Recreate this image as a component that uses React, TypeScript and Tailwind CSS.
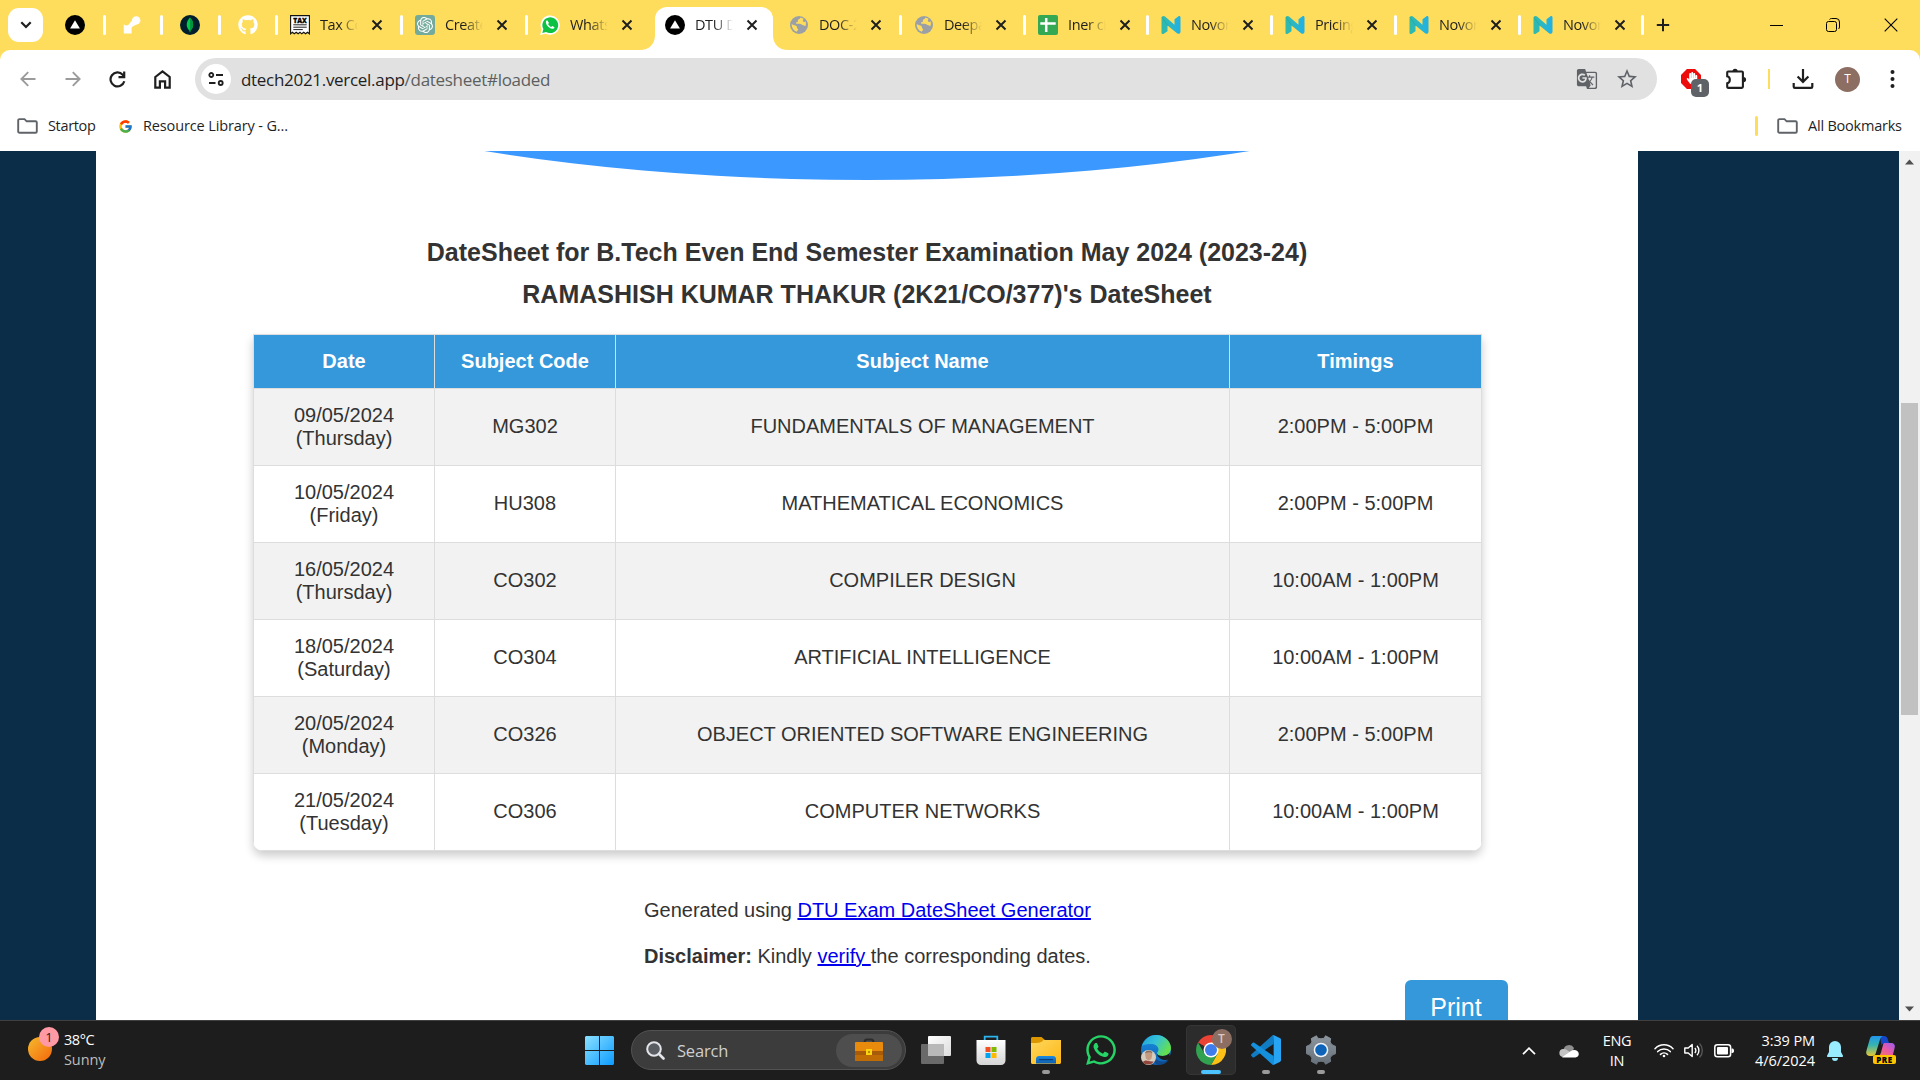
import React from "react";
import { FaGithub, FaWhatsapp, FaHandPaper } from "react-icons/fa";
import { SiOpenai } from "react-icons/si";
import { FcGoogle } from "react-icons/fc";
import { MdGTranslate, MdStarBorder } from "react-icons/md";

const UI = "font-['Open_Sans','Noto_Sans',sans-serif]";

/* ---------- favicons ---------- */

const Vercel = () => (
  <svg width="20" height="20" viewBox="0 0 20 20">
    <circle cx="10" cy="10" r="10" fill="#000" />
    <path d="M10 5.2 14.9 13.6H5.1z" fill="#fff" />
  </svg>
);

const Segment = () => (
  <svg width="20" height="20" viewBox="0 0 20 20" fill="#fff">
    <circle cx="14.2" cy="5.4" r="4.2" />
    <path d="M1.8 8.6c0 2.2 3.4 2.6 5 .9L11 4l5 4.5-5.6 3.3c-.6.5-.8 1-.8 1.700V18.500H1.800z" />
  </svg>
);

const Mongo = () => (
  <svg width="20" height="20" viewBox="0 0 20 20">
    <circle cx="10" cy="10" r="10" fill="#001e2b" />
    <path d="M10 2.6c2 2.200 3.200 4.400 3.200 7.100 0 2.600-1.200 4.500-2.800 5.700l-.2 1.900h-.5l-.2-1.900C7.900 14.200 6.700 12.300 6.700 9.700c0-2.700 1.300-4.900 3.300-7.100z" fill="#00ca48" />
    <path d="M10 2.600c2 2.200 3.200 4.400 3.200 7.100 0 2.600-1.200 4.500-2.800 5.700l-.2 1.900H10z" fill="#00963e" />
  </svg>
);

const Tax = () => (
  <svg width="20" height="20" viewBox="0 0 20 20">
    <path d="M.6.6h18.800v18.200l-1.900-1.500-1.900 1.500-1.900-1.500-1.900 1.500L10 17.300l-1.900 1.500-1.900-1.500-1.900 1.500-1.900-1.500-1.800 1.500z" fill="#fff" stroke="#111" strokeWidth="1.1" />
    <text x="10" y="7.700" textAnchor="middle" fontSize="6.600" fontWeight="800" fontFamily="Open Sans" textLength="13.500" stroke="#111" strokeWidth=".3">TAX</text>
    <path d="M3.300 9.800h13.400M3.300 12.200h13.400M3.300 14.600h9.500" stroke="#222" strokeWidth="1" />
  </svg>
);

const OpenAI = () => (
  <span className="flex h-5 w-5 items-center justify-center rounded-[3px] bg-[#74aa9c] text-white">
    <SiOpenai size={16} />
  </span>
);

const WhatsAppSmall = () => (
  <svg width="20" height="20" viewBox="0 0 20 20">
    <path d="M1 19.200 2.300 14.400A9 9 0 1 1 5.800 17.900z" fill="#fff" stroke="#fff" strokeWidth="1.200" />
    <path d="M2.300 17.900 3.400 14.100A7.900 7.900 0 1 1 6.100 16.900z" fill="#0dc143" />
    <path d="M7.200 5.200c-.9.300-1.500 1.200-1.300 2.300.5 3.100 3.200 5.700 6.200 6.300 1.200.2 2.200-.5 2.400-1.600l-2.200-1.300-1.200 1.100c-1.300-.5-2.400-1.600-3-2.900l.9-1.200z" fill="#fff" />
  </svg>
);

const Globe = () => (
  <svg width="20" height="20" viewBox="0 0 20 20">
    <circle cx="10" cy="10" r="9" fill="#9aa0a6" />
    <path d="M10.600 2.600c.8.400.6 1.200-.2 1.500-1.200.3-1.700.9-1.500 1.800.2.700-.6 1.300-1.400 1.400-.9.200-.6 1.400.2 1.500h2.900c1.600.1 2 1.100 3.200 1.200 1.100.1 1 .9 2.600 1 .5-1 .8-2.800.2-4.400-1.100.6-2.400.5-2.700-.4-.3-1 .6-1.500.5-2.700z" fill="#ffdd5c" />
    <path d="M2.700 9c1.600 1.700 3.500.8 4.700 2 1 1 .2 2.100 1.200 2.700 1 .5.600 1.600-.2 1.900l-.6 1.200C4.700 15.700 2.500 12.700 2.700 9z" fill="#ffdd5c" />
  </svg>
);

const Sheet = () => (
  <svg width="20" height="20" viewBox="0 0 20 20">
    <rect width="20" height="20" rx="2" fill="#34a853" />
    <path d="M8.200 3v14M2.300 8.400h15.400" stroke="#fff" strokeWidth="2.500" />
  </svg>
);

const NLogo = () => (
  <svg width="20" height="20" viewBox="0 0 20 20">
    <defs>
      <linearGradient id="nl" x1="0" y1="0" x2="1" y2="0">
        <stop offset="0" stopColor="#31b9a6" />
        <stop offset=".5" stopColor="#2bb7c8" />
        <stop offset="1" stopColor="#1fb0e8" />
      </linearGradient>
    </defs>
    <path d="M.5 3.200C.5 1.200 2.700.4 4 1.600l9.500 8.200V4.200L17.500 1.300c1-.6 2 0 2 1.200v14.300c0 1.900-2 2.700-3.500 1.500L6.500 10.500v5.800l-3.700 2.400c-1.200.7-2.300 0-2.300-1.300z" fill="url(#nl)" />
    <path d="M.8 2.200 7 10.800" stroke="#1a9aa5" strokeWidth=".7" opacity=".6" />
  </svg>
);

const X = () => (
  <svg width="12" height="12" viewBox="0 0 12 12" className="shrink-0">
    <path d="M1.500 1.500l9 9M10.500 1.500l-9 9" stroke="#1f1f1f" strokeWidth="2" />
  </svg>
);

/* ---------- tab strip ---------- */

const Sep = () => <span className="h-5 w-[3px] shrink-0 rounded-sm bg-white" />;

function Pinned({ w, pad, children }: { w: string; pad: string; children: React.ReactNode }) {
  return (
    <div className={`flex h-full shrink-0 items-center justify-between ${w} ${pad}`}>
      {children}
      <Sep />
    </div>
  );
}

function Tab({ icon, title, w, last = true }: { icon: React.ReactNode; title: string; w: string; last?: boolean }) {
  return (
    <div className={`flex h-full shrink-0 items-center pl-3 ${w}`}>
      <span className="w-5 shrink-0">{icon}</span>
      <span className="ml-[10px] w-[38px] shrink-0 overflow-hidden text-[14.500px] leading-5 tracking-[-0.4px] whitespace-nowrap text-[#1f1f1f] [mask-image:linear-gradient(to_right,#000_50%,transparent_100%)]">
        {title}
      </span>
      <span className="ml-[12.500px] flex">
        <X />
      </span>
      {last && (
        <span className="ml-auto flex">
          <Sep />
        </span>
      )}
    </div>
  );
}

function TabStrip() {
  return (
    <div className="flex h-[50px] items-center bg-[#ffdd5c]">
      <div className="ml-2 flex h-[34px] w-[35px] shrink-0 items-center justify-center rounded-[11px] bg-white">
        <svg width="12" height="8" viewBox="0 0 12 8">
          <path d="M1.300 1.300 6 6l4.700-4.700" fill="none" stroke="#1f1f1f" strokeWidth="2.200" />
        </svg>
      </div>
      <Pinned w="w-[63px]" pad="pl-[22px]"><Vercel /></Pinned>
      <Pinned w="w-[57px]" pad="pl-4"><Segment /></Pinned>
      <Pinned w="w-[58px]" pad="pl-[17px]"><Mongo /></Pinned>
      <Pinned w="w-[57px]" pad="pl-[17px]"><FaGithub size={20} color="#fff" /></Pinned>
      <Tab icon={<Tax />} title="Tax Co" w="w-[125px]" />
      <Tab icon={<OpenAI />} title="Create" w="w-[125px]" />
      <Tab icon={<WhatsAppSmall />} title="Whats" w="w-[112px]" last={false} />
      <div className="flex h-full w-[148px] shrink-0">
        <div className="flex w-[15px] items-end">
          <svg width="15" height="15" viewBox="0 0 15 15"><path d="M15 0v15H0C9 15 15 9 15 0z" fill="#fff" /></svg>
        </div>
        <div className="mt-[7px] h-[43px] w-[118px] rounded-t-xl bg-white">
          <div className="-mt-[7px] -ml-[2px] h-[50px]">
            <Tab icon={<Vercel />} title="DTU Da" w="w-[118px]" last={false} />
          </div>
        </div>
        <div className="flex w-[15px] items-end">
          <svg width="15" height="15" viewBox="0 0 15 15"><path d="M0 0v15h15C6 15 0 9 0 0z" fill="#fff" /></svg>
        </div>
      </div>
      <div className="-ml-[11px] flex h-full shrink-0">
        <Tab icon={<Globe />} title="DOC-2" w="w-[125px]" />
        <Tab icon={<Globe />} title="Deepa" w="w-[124px]" />
        <Tab icon={<Sheet />} title="Iner ci" w="w-[123px]" />
        <Tab icon={<NLogo />} title="Novor" w="w-[124px]" />
        <Tab icon={<NLogo />} title="Pricing" w="w-[124px]" />
        <Tab icon={<NLogo />} title="Novor" w="w-[124px]" />
        <Tab icon={<NLogo />} title="Novor" w="w-[123px]" />
      </div>
      <svg className="ml-3 shrink-0" width="14" height="14" viewBox="0 0 14 14">
        <path d="M7 .8v12.400M.8 7h12.400" stroke="#1f1f1f" strokeWidth="2" />
      </svg>
      <div className="mr-[22px] ml-auto flex items-center">
        <span className="mr-[43px] h-px w-[13px] bg-black" />
        <svg className="mr-[44px]" width="14" height="14" viewBox="0 0 14 14" fill="none" stroke="#000" strokeWidth="1">
          <rect x=".5" y="3.500" width="10" height="10" rx="2" />
          <path d="M3.500 1.500c.4-.6 1-1 2-1H10A3.500 3.500 0 0 1 13.500 4v5c0 .9-.4 1.500-1 2" />
        </svg>
        <svg width="14" height="14" viewBox="0 0 14 14">
          <path d="M.7.7l12.600 12.600M13.300.7.700 13.300" stroke="#000" strokeWidth="1.100" />
        </svg>
      </div>
    </div>
  );
}

/* ---------- toolbar ---------- */

const Folder = () => (
  <svg width="21" height="16" viewBox="0 0 21 16" className="shrink-0">
    <path d="M1.200 2.400c0-.8.500-1.300 1.300-1.300h5l2.200 2.200h8.800c.8 0 1.300.5 1.300 1.300v8.900c0 .8-.5 1.300-1.300 1.300h-16c-.8 0-1.300-.5-1.300-1.300z" fill="none" stroke="#5f6368" strokeWidth="1.900" />
  </svg>
);

function Toolbar() {
  return (
    <div className="bg-[#ffdd5c]">
      <div className="rounded-t-[10px] bg-white">
        <div className="flex h-[58px] items-center">
          <svg className="ml-5 shrink-0" width="16" height="16" viewBox="0 0 16 16" fill="none" stroke="#9b9b9b" strokeWidth="1.900">
            <path d="M15.500 8H1.800M8.200 1.200 1.400 8l6.800 6.800" />
          </svg>
          <svg className="ml-[29px] shrink-0" width="16" height="16" viewBox="0 0 16 16" fill="none" stroke="#9b9b9b" strokeWidth="1.900">
            <path d="M.5 8h13.700M7.800 1.200 14.600 8l-6.800 6.800" />
          </svg>
          <svg className="ml-[28px] shrink-0" width="17" height="17" viewBox="0 0 17 17" fill="none" stroke="#1f1f1f" strokeWidth="2.200">
            <path d="M15.300 10.300A7 7 0 1 1 13.700 3.700L15 5.300" />
            <path d="M15.200.500v5.700H9.500" />
          </svg>
          <svg className="ml-[28px] shrink-0" width="17" height="19" viewBox="0 0 17 19" fill="none" stroke="#1f1f1f" strokeWidth="2.200">
            <path d="M1.300 7 8.500 1.500 15.700 7v10.700h-4.600v-6.300H5.900v6.300H1.300z" />
          </svg>
          <div className="ml-6 flex h-[42px] w-[1462px] shrink-0 items-center rounded-full bg-[#e1e1e1]">
            <div className="ml-[6px] flex h-[30px] w-[30px] items-center justify-center rounded-full bg-white">
              <svg width="16" height="14" viewBox="0 0 16 14" fill="none" stroke="#1f1f1f" strokeWidth="1.800">
                <circle cx="3.300" cy="3" r="2" />
                <path d="M8 3h7M1 11h6.500" />
                <circle cx="12.700" cy="11" r="2" />
              </svg>
            </div>
            <span className="mt-[1px] ml-[10px] text-[17px] leading-6 tracking-[-0.3px] text-[#1f1f1f]">
              dtech2021.vercel.app<span className="text-[#5c5f5e]">/datesheet#loaded</span>
            </span>
            <MdGTranslate className="ml-auto text-[#5f6368]" size={22} />
            <MdStarBorder className="mr-[18px] ml-[17px] text-[#5f6368]" size={24} />
          </div>
          <div className="relative ml-6 h-5 w-[20px] shrink-0">
            <svg width="20" height="20" viewBox="0 0 20 20">
              <path d="M5.900 0h8.200L20 5.900v8.200L14.100 20H5.900L0 14.100V5.900z" fill="#ed0c0c" />
            </svg>
            <FaHandPaper className="absolute top-[3px] left-[5px] text-white" size={12} />
            <span className="absolute top-[10px] left-[10px] flex h-[18px] w-[18px] items-center justify-center rounded-[5px] bg-[#5f6368] text-[11px] font-bold text-white">1</span>
          </div>
          <svg className="ml-[24px] shrink-0" width="22" height="22" viewBox="0 0 22 22">
            <path d="M2.200 4.500c0-.7.400-1 1-1h13.600c.7 0 1.100.4 1.100 1.100v14.200c0 .7-.4 1.100-1.100 1.100H3.200c-.6 0-1-.4-1-1.100v-3.500c3.500-.8 3.500-6.300 0-7z" fill="none" stroke="#1f1f1f" strokeWidth="2.100" />
            <path d="M7.500 3.400a2.600 2.600 0 0 1 5.200 0zM18.400 8.900a2.700 2.700 0 0 1 0 5.400z" fill="#1f1f1f" />
          </svg>
          <span className="ml-[21px] h-5 w-[2px] shrink-0 bg-[#ffdd5c]" />
          <svg className="ml-[22px] shrink-0" width="22" height="20" viewBox="0 0 22 20" fill="none" stroke="#1f1f1f" strokeWidth="2.200">
            <path d="M11 0v12.500M5.600 7.500l5.400 5.400 5.400-5.400M1.700 14v3.700c0 .7.400 1.200 1.200 1.200h16.200c.8 0 1.200-.5 1.200-1.200V14" />
          </svg>
          <span className="ml-[21px] flex h-[25px] w-[25px] shrink-0 items-center justify-center rounded-full bg-[#8d6e63] text-[12px] text-white">T</span>
          <svg className="ml-[30px] shrink-0" width="5" height="18" viewBox="0 0 5 18" fill="#1f1f1f">
            <circle cx="2.500" cy="2" r="2" /><circle cx="2.500" cy="9" r="2" /><circle cx="2.500" cy="16" r="2" />
          </svg>
        </div>
        <div className="flex h-[43px] items-start pt-2 text-[14.500px] leading-[20px] text-[#1f1f1f]">
          <span className="mt-[2px] ml-[17px]"><Folder /></span>
          <span className="ml-[10px] w-[70px] tracking-[-0.35px]">Startop</span>
          <FcGoogle size={15} className="mt-[3px]" />
          <span className="ml-[10px] tracking-[-0.13px]">Resource Library - G...</span>
          <span className="ml-auto h-5 w-[3px] rounded bg-[#ffdd5c]" />
          <span className="mt-[2px] ml-[19px]"><Folder /></span>
          <span className="mr-[18px] ml-[10px] w-[94px] tracking-[-0.22px] whitespace-nowrap">All Bookmarks</span>
        </div>
      </div>
    </div>
  );
}

/* ---------- page ---------- */

const ROWS = [
  ["09/05/2024", "(Thursday)", "MG302", "FUNDAMENTALS OF MANAGEMENT", "2:00PM - 5:00PM"],
  ["10/05/2024", "(Friday)", "HU308", "MATHEMATICAL ECONOMICS", "2:00PM - 5:00PM"],
  ["16/05/2024", "(Thursday)", "CO302", "COMPILER DESIGN", "10:00AM - 1:00PM"],
  ["18/05/2024", "(Saturday)", "CO304", "ARTIFICIAL INTELLIGENCE", "10:00AM - 1:00PM"],
  ["20/05/2024", "(Monday)", "CO326", "OBJECT ORIENTED SOFTWARE ENGINEERING", "2:00PM - 5:00PM"],
  ["21/05/2024", "(Tuesday)", "CO306", "COMPUTER NETWORKS", "10:00AM - 1:00PM"],
];

function Page() {
  return (
    <div className="flex h-[869px] bg-[#0c2d48]">
      <div className="ml-24 flex w-[1542px] flex-col overflow-hidden bg-white font-['Liberation_Sans',Arial,sans-serif] text-[20px] leading-[23px] text-[#333]">
        <div className="flex h-[29px] shrink-0 items-end">
          <div className="h-[440px] w-full shrink-0 rounded-[50%] bg-[#3b98ff]" />
        </div>
        <div className="mt-[51px] text-center text-[25px] leading-[42px] font-bold">
          <h2>DateSheet for B.Tech Even End Semester Examination May 2024 (2023-24)</h2>
          <h2>RAMASHISH KUMAR THAKUR (2K21/CO/377)&apos;s DateSheet</h2>
        </div>
        <table className="mt-[19px] ml-[157px] w-[1229px] table-fixed border-collapse overflow-hidden rounded-b-[10px] text-center shadow-[0_5px_10px_rgba(0,0,0,0.2)]">
          <colgroup>
            <col className="w-[181px]" />
            <col className="w-[181px]" />
            <col className="w-[614px]" />
            <col className="w-[252px]" />
          </colgroup>
          <thead>
            <tr className="h-[54px] bg-[#3498db] text-white">
              {["Date", "Subject Code", "Subject Name", "Timings"].map((h) => (
                <th key={h} className="border border-[#ddd] font-bold">{h}</th>
              ))}
            </tr>
          </thead>
          <tbody>
            {ROWS.map(([date, day, code, name, time]) => (
              <tr key={date} className="h-[77px] odd:bg-[#f2f2f2]">
                <td className="border border-[#ddd]">{date}<br />{day}</td>
                <td className="border border-[#ddd] pb-[2px]">{code}</td>
                <td className="border border-[#ddd] pb-[2px]">{name}</td>
                <td className="border border-[#ddd] pb-[2px]">{time}</td>
              </tr>
            ))}
          </tbody>
        </table>
        <div className="mt-12 ml-[548px]">
          <p>Generated using <a className="text-[#0000ee] underline">DTU Exam DateSheet Generator</a></p>
          <p className="mt-[23px]"><b>Disclaimer:</b> Kindly <a className="text-[#0000ee] underline">verify </a>the corresponding dates.</p>
        </div>
        <button className="mt-[12px] ml-[1309px] h-[54px] w-[103px] shrink-0 rounded-md bg-[#3498db] pt-[1px] pr-[1px] text-[25px] leading-[29px] text-white">Print</button>
      </div>
      <div className="ml-auto flex w-[21px] flex-col items-center bg-[#f1f1f1]">
        <svg className="mt-2" width="9" height="6" viewBox="0 0 9 6"><path d="M0 5.500 4.500.5 9 5.500z" fill="#505050" /></svg>
        <div className="mt-[238px] h-[312px] w-[17px] bg-[#c1c1c1]" />
        <svg className="mt-auto mb-2" width="9" height="6" viewBox="0 0 9 6"><path d="M0 .5 4.500 5.500 9 .500z" fill="#505050" /></svg>
      </div>
    </div>
  );
}

/* ---------- taskbar ---------- */

function TaskApp({ children, dot = false, active = false }: { children: React.ReactNode; dot?: boolean; active?: boolean }) {
  return (
    <div className="flex h-full w-[55px] shrink-0 justify-center">
      <div className={`mt-1 flex h-[50px] w-[50px] flex-col items-center rounded-[5px] pt-[10px] ${active ? "bg-[#2c2c2c] ring-1 ring-[#353535] ring-inset" : ""}`}>
        {children}
        {dot && <span className={`mt-[5px] h-[4px] shrink-0 rounded-full ${active ? "w-5 bg-[#4cc2ff]" : "w-2 bg-[#9a9a9a]"}`} />}
      </div>
    </div>
  );
}

const Store = () => (
  <svg width="30" height="30" viewBox="0 0 30 30" className="shrink-0">
    <defs><linearGradient id="st" x1="0" y1="0" x2="0" y2="1"><stop offset="0" stopColor="#fff" /><stop offset="1" stopColor="#d5d5d5" /></linearGradient></defs>
    <path d="M8.700 6V1.700h12.600V6" fill="none" stroke="#2bb4ee" strokeWidth="1.800" />
    <path d="M.5 5h29v20.500a4.500 4.500 0 0 1-4.500 4.500H5a4.500 4.500 0 0 1-4.500-4.500z" fill="url(#st)" />
    <path d="M9.500 12h5v5h-5z" fill="#f25022" /><path d="M15.500 12h5v5h-5z" fill="#7fba00" />
    <path d="M9.500 18h5v5h-5z" fill="#00a4ef" /><path d="M15.500 18h5v5h-5z" fill="#ffb900" />
  </svg>
);

const Explorer = () => (
  <svg width="30" height="30" viewBox="0 0 30 30" className="shrink-0">
    <defs>
      <linearGradient id="ex" x1="0" y1="0" x2="1" y2="1"><stop offset="0" stopColor="#ffd75e" /><stop offset="1" stopColor="#fdb714" /></linearGradient>
      <linearGradient id="eb" x1="0" y1="0" x2="0" y2="1"><stop offset="0" stopColor="#1a8ae0" /><stop offset="1" stopColor="#0f5fb0" /></linearGradient>
    </defs>
    <path d="M0 3.500C0 2.700.7 2 1.500 2h9L14 5v5H0z" fill="#dc9600" />
    <path d="M0 8c5 0 9.500 0 11-1.500L12.500 5H30v22.500c0 .8-.7 1.500-1.500 1.500h-27C.7 29 0 28.300 0 27.500z" fill="url(#ex)" />
    <path d="M5 28.500V24c0-1.700 1.300-3 3-3h14c1.700 0 3 1.300 3 3v4.500z" fill="url(#eb)" />
    <path d="M8.500 24.700h13" stroke="#0a3f7c" strokeWidth="1.200" strokeLinecap="round" />
  </svg>
);

const Edge = () => (
  <svg width="30" height="30" viewBox="0 0 30 30" className="shrink-0">
    <defs>
      <linearGradient id="e1" x1="0" y1="0" x2="1" y2=".5"><stop offset="0" stopColor="#1c9fdc" /><stop offset=".5" stopColor="#35c2d8" /><stop offset="1" stopColor="#64e04d" /></linearGradient>
      <linearGradient id="e2" x1="0" y1="0" x2="0" y2="1"><stop offset="0" stopColor="#1c8fe0" /><stop offset="1" stopColor="#0b61b8" /></linearGradient>
    </defs>
    <circle cx="15" cy="15" r="15" fill="url(#e2)" />
    <path d="M1 11C3.500 4 8.500 0 15 0c8.500 0 15 6.500 15 13 0 5-4 8-8.500 8-3.500 0-5.500-1.500-5.500-2.800 0-1 1.500-1.500 1.500-3.700 0-3-3-5.500-7-5.500C6 9 3 9.500 1 11z" fill="url(#e1)" />
    <path d="M12 17c-.5 5 4 9.500 9.500 9.500 2.500 0 4.500-.5 6.500-2-2.500 3.800-6 5.500-11 5.500-5-2-7.500-8-5-13z" fill="#114a8b" />
    <path d="M16 18.200c0 1.300 2 2.800 5.500 2.800 3 0 5.500-1 7.200-3l-.3 1.500 1 3c-3 3-7 3.200-9.400 1.500-2.500-1.600-4.200-3.500-4-5.800z" fill="#1d1d1d" />
    <circle cx="7.500" cy="22.500" r="7.500" fill="#d6cdbf" />
    <path d="M4.200 20c0-3 1.300-4 3.500-4s3.800 1.500 3.500 4l-.8 3.800-2.600 2-2.800-2z" fill="#c49a80" />
    <path d="M4 18.500c.2-2 1.700-3 3.800-3s3.700.8 3.500 3l-1.800-1.200-3.500.2z" fill="#8a7060" />
    <path d="M1.500 27c2-1.500 3.500-2 6-1l5.500.8A7.500 7.500 0 0 1 1.500 27z" fill="#94463c" />
  </svg>
);

const Chrome = () => (
  <div className="relative h-[30px] w-[30px] shrink-0">
    <svg width="30" height="30" viewBox="0 0 48 48">
      <path d="M24 24 3.220 12A24 24 0 0 1 44.780 12z" fill="#ea4335" />
      <path d="M24 12h20.800A24 24 0 0 1 24 48l10.400-18z" fill="#fbc116" />
      <path d="M13.600 30 3.220 12A24 24 0 0 0 24 48l10.400-18z" fill="#31a350" />
      <circle cx="24" cy="24" r="12" fill="#fff" />
      <circle cx="24" cy="24" r="9.600" fill="#3f7ded" />
    </svg>
    <span className="absolute -top-[6px] left-[16px] flex h-5 w-5 items-center justify-center rounded-full bg-[#8d6e63] text-[12px] leading-none font-semibold text-[#d9c9c2]">T</span>
  </div>
);

const VSCode = () => (
  <svg width="30" height="30" viewBox="0 0 100 100" className="shrink-0">
    <path d="M75 30 11 74c-2 1.500-4 1.300-5.500 0L1.500 70c-2-1.800-2-4.500 0-6L72 1l5 1z" fill="#0f7cc4" />
    <path d="M75 70 11 26c-2-1.500-4-1.300-5.500 0L1.500 30c-2 1.800-2 4.500 0 6L72 99l5-1z" fill="#1590dc" />
    <path d="M72 1c1.500-1 3-1 4.500-.4L96 10c2.500 1 4 3 4 5.500v69c0 2.500-1.500 4.500-4 5.500l-19.500 9.400c-1.500.6-3 .6-4.500-.4 2 1 3.500-.5 3.500-2.500V4c0-2.500-1.500-3.500-3.500-3z" fill="#27a5f4" />
  </svg>
);

const Gear = () => (
  <svg width="30" height="30" viewBox="0 0 30 30" className="shrink-0">
    <defs><linearGradient id="ge" x1="0" y1="0" x2="0" y2="1"><stop offset="0" stopColor="#8c959d" /><stop offset="1" stopColor="#66717b" /></linearGradient></defs>
    <path d="M10.500.8 11.700 3.200Q15 4.400 18.300 3.200L19.500.8 24.700 3.600 24 7Q25.400 10.400 29.500 11.300V18.700Q25.400 19.600 24 23L24.700 26.400 19.500 29.200 18.300 26.800Q15 25.600 11.700 26.800L10.500 29.200 5.300 26.400 6 23Q4.600 19.600.5 18.700V11.300Q4.600 10.400 6 7L5.300 3.600z" fill="url(#ge)" stroke="url(#ge)" strokeWidth="1" strokeLinejoin="round" />
    <circle cx="15" cy="15" r="7.300" fill="#f0f4f8" />
    <circle cx="15" cy="15" r="5.800" fill="#0c63b8" />
  </svg>
);

function Taskbar() {
  return (
    <div className="flex h-[60px] items-stretch border-t border-[#404040] bg-[#1d1d1d] text-white">
      <div className="relative mt-4 ml-7 h-6 w-6 shrink-0 rounded-full bg-linear-to-br from-[#f3b92c] to-[#f2650a]">
        <span className="absolute -top-[10px] left-[11px] flex h-5 w-5 items-center justify-center rounded-full bg-[#ff99a4] text-[13px] leading-none text-[#1d1d1d]">1</span>
      </div>
      <div className="mt-[9px] ml-[12px] w-[521px] shrink-0 text-[14.500px] leading-5">
        <div className="tracking-[-0.45px]">38°C</div>
        <div className="tracking-[-0.1px] text-[#bdbdbd]">Sunny</div>
      </div>
      <svg className="mt-[15px] shrink-0" width="29" height="29" viewBox="0 0 29 29">
        <defs><linearGradient id="wi" x1="0" y1="0" x2="1" y2="1"><stop offset="0" stopColor="#8be0ff" /><stop offset="1" stopColor="#0c9bff" /></linearGradient></defs>
        <path d="M1 0h13v14H0V1zM15 0h13l1 1v13H15zM0 15h14v14H1l-1-1zM15 15h14v13l-1 1H15z" fill="url(#wi)" />
      </svg>
      <div className="mt-[9px] ml-[17px] flex h-10 w-[275px] shrink-0 items-center rounded-full border border-[#525252] bg-[#3c3c3c]">
        <svg className="ml-[14px] shrink-0" width="19" height="19" viewBox="0 0 19 19" fill="none" stroke="#e3e5ea">
          <circle cx="8" cy="8" r="6.800" strokeWidth="2" fill="#5a5d61" /><path d="m13 13 4.500 4.500" strokeWidth="2.600" strokeLinecap="round" />
        </svg>
        <span className="mt-[2px] ml-3 text-[16.500px] leading-6 tracking-[-0.2px] text-[#cfcfcf]">Search</span>
        <span className="mr-[3px] ml-auto flex h-[33px] w-[66px] items-center justify-center rounded-full bg-[#4e4e4e]">
          <svg width="28" height="24" viewBox="0 0 28 24">
            <path d="M9.500 4.500c0-2 1-3 2.500-3h4c1.500 0 2.500 1 2.500 3" fill="none" stroke="#2b2b2b" strokeWidth="2" />
            <rect y="4" width="28" height="19" rx="1" fill="#e88a0c" />
            <path d="M0 13h28v9.500l-.5.500H.5l-.5-.5z" fill="#a85b08" /><path d="M0 17h28v5.500l-.5.500H.5l-.5-.5z" fill="#c06c06" />
            <rect x="11" y="11" width="6" height="6" fill="#fbd40f" /><rect x="13" y="13" width="2" height="2" fill="#b98c00" />
          </svg>
        </span>
      </div>
      <svg className="mt-[15px] mr-[12px] ml-[15px] shrink-0" width="30" height="28" viewBox="0 0 30 28">
        <defs><linearGradient id="tv" x1="0" y1="0" x2="1" y2="1"><stop offset="0" stopColor="#fff" /><stop offset="1" stopColor="#dcdcdc" /></linearGradient></defs>
        <rect x="7" y="0" width="23" height="20" rx="1" fill="url(#tv)" />
        <rect x="0" y="8" width="23" height="20" rx="1" fill="#6a6a6a" /><path d="M7 8h16v12H7z" fill="#b9b9b9" />
      </svg>
      <TaskApp><Store /></TaskApp>
      <TaskApp dot><Explorer /></TaskApp>
      <TaskApp><FaWhatsapp size={34} color="#25d366" className="-mt-[2px] shrink-0" /></TaskApp>
      <TaskApp><Edge /></TaskApp>
      <TaskApp dot active><Chrome /></TaskApp>
      <TaskApp dot><VSCode /></TaskApp>
      <TaskApp dot><Gear /></TaskApp>

      <div className="mr-6 ml-auto flex items-center text-[14.500px] leading-5">
        <svg width="14" height="8" viewBox="0 0 14 8"><path d="M1 7.200 7 1.200l6 6" fill="none" stroke="#fff" strokeWidth="1.700" /></svg>
        <svg className="ml-[23px]" width="20" height="14" viewBox="0 0 20 14">
          <path d="M4.500 6A5.600 5.600 0 0 1 15 4l-2 5-7-1z" fill="#8f8f8f" />
          <path d="M4 13a4 4 0 0 1 .8-8c1.200 0 2 .3 3 1l5 3-7 4z" fill="#c4c4c4" />
          <path d="M3 13.200 12 7c1-.6 2-.9 3-.9a4.300 4.300 0 0 1 4.800 4c0 2-1.500 3.300-3.300 3.300H4z" fill="#fff" />
        </svg>
        <div className="ml-[22px] w-[32px] text-center tracking-[-0.3px]">ENG<br />IN</div>
        <svg className="ml-[21px]" width="20" height="15" viewBox="0 0 20 15" fill="none" stroke="#fff" strokeWidth="1.500" strokeLinecap="round">
          <path d="M1 5.700a12.500 12.500 0 0 1 18 0M3.700 8.600a8.700 8.700 0 0 1 12.600 0M6.500 11.400a5 5 0 0 1 7 0" /><circle cx="10" cy="13" r="1.300" fill="#fff" stroke="none" />
        </svg>
        <svg className="ml-[10px]" width="20" height="17" viewBox="0 0 20 17" fill="none" stroke="#fff" strokeWidth="1.400">
          <path d="M.8 6v5h3.400l4 3.500v-12L4.200 6z" strokeLinejoin="round" /><path d="M10.800 6a3.500 3.500 0 0 1 0 5M13 3.700a7 7 0 0 1 0 9.600" /><path d="M15.500 1.500a10 10 0 0 1 0 14" stroke="#555" />
        </svg>
        <svg className="ml-[10px]" width="20" height="14" viewBox="0 0 20 14">
          <rect x=".8" y=".8" width="15.800" height="12" rx="2.500" fill="none" stroke="#fff" strokeWidth="1.500" /><rect x="3" y="3" width="11" height="7.600" rx="1" fill="#fff" /><path d="M17.500 4.500h1c1 .3 1.500 1 1.500 2.300s-.5 2-1.500 2.300h-1z" fill="#fff" />
        </svg>
        <div className="ml-[18px] w-[63px] text-right whitespace-nowrap"><div className="tracking-[-0.1px]">3:39 PM</div><div className="tracking-[-0.05px]">4/6/2024</div></div>
        <svg className="ml-[12px]" width="16" height="20" viewBox="0 0 16 20" fill="#99ebff">
          <path d="M8 0a6 6 0 0 1 6 6v5l2 3.800c.2.700 0 1.200-.8 1.200H.8c-.8 0-1-.5-.8-1.200L2 11V6a6 6 0 0 1 6-6zM5 17h6a3 3 0 0 1-6 0z" />
        </svg>
        <div className="relative ml-[23px] h-[29px] w-[30px]">
          <svg width="30" height="29" viewBox="0 0 30 29">
            <defs>
              <linearGradient id="c1" x1="0" y1="0" x2="0" y2="1"><stop offset="0" stopColor="#2196ee" /><stop offset=".45" stopColor="#35b4b0" /><stop offset="1" stopColor="#e8c832" /></linearGradient>
              <linearGradient id="c2" x1="1" y1="0" x2="0" y2="1"><stop offset="0" stopColor="#9a5cf0" /><stop offset=".5" stopColor="#e85aa8" /><stop offset="1" stopColor="#f57a5a" /></linearGradient>
            </defs>
            <path d="M14 0h4c2 0 3 1 3.500 2.500L23 7h-4c-2 0-3 1-3.500 2.500z" fill="#1547c8" />
            <path d="M7 0h10c-2 .5-2.500 2-3 3.500l-4 13C9.500 18.500 8.500 20 6 20H4c-3 0-4.500-2-3.500-5.500L3.500 4C4.300 1.300 5 0 7 0z" fill="url(#c1)" />
            <path d="M18 7h7c3 0 4.500 2 3.600 5l-2 8H12c2-.5 2.500-2 3-3.500L17 9c.3-1.200.5-1.600 1-2z" fill="url(#c2)" />
          </svg>
          <span className="absolute top-[19px] left-[7px] flex h-[9px] w-[23px] items-center justify-center rounded-[2px] bg-[#ffc400] text-[8px] leading-none font-extrabold tracking-[0.5px] text-black">PRE</span>
        </div>
      </div>
    </div>
  );
}

export default function App() {
  return (
    <div className={`h-[1080px] w-[1920px] overflow-hidden bg-white ${UI}`}>
      <TabStrip />
      <Toolbar />
      <Page />
      <Taskbar />
    </div>
  );
}
